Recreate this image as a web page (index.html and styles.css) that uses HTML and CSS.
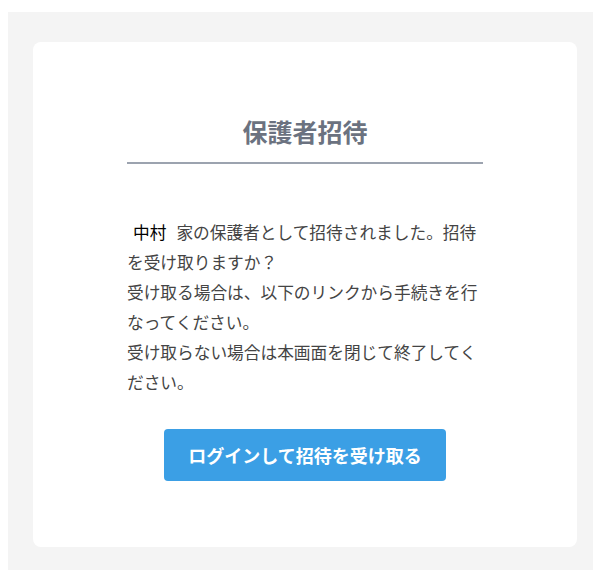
FILE: index.html
```html
<!DOCTYPE html>
<html lang="ja">
<head>
<meta charset="utf-8">
<title>保護者招待</title>
<link rel="stylesheet" href="styles.css">
</head>
<body>
<div class="page">
  <div class="card">
    <div class="content">
      <h1 class="title">保護者招待</h1>
      <div class="rule"></div>
      <p class="message"><span class="name">中村</span>家の保護者として招待されました。招待を受け取りますか？<br>受け取る場合は、以下のリンクから手続きを行なってください。<br>受け取らない場合は本画面を閉じて終了してください。</p>
      <a class="button" href="#">ログインして招待を受け取る</a>
    </div>
  </div>
</div>
</body>
</html>
```
FILE: styles.css
```css
html, body {
  margin: 0;
  padding: 0;
  background: #ffffff;
}
body {
  font-family: "Noto Sans CJK JP", "Noto Sans", sans-serif;
}
.page {
  margin: 12px 11px 0 8px;
  padding: 30px 16px 23px 25px;
  background: #f4f4f4;
}
.card {
  background: #ffffff;
  border-radius: 8px;
  height: 505px;
  box-sizing: border-box;
  padding-top: 73px;
  display: flex;
  justify-content: center;
}
.content {
  width: 356px;
  display: flex;
  flex-direction: column;
  align-items: center;
}
.title {
  margin: 0;
  font-size: 25px;
  line-height: 32px;
  font-weight: 700;
  color: #6b7280;
}
.rule {
  align-self: stretch;
  height: 2px;
  background: #9ca3af;
  margin-top: 15px;
}
.message {
  align-self: stretch;
  margin: 53px 0 0 0;
  font-size: 16.7px;
  line-height: 30px;
  color: #444444;
  width: 358px;
}
.name {
  color: #000000;
  margin: 0 10px 0 6px;
}
.button {
  margin-top: 32px;
  width: 282px;
  height: 52px;
  box-sizing: border-box;
  display: flex;
  align-items: center;
  justify-content: center;
  background: #3b9fe5;
  color: #ffffff;
  border-radius: 4px;
  font-size: 18px;
  font-weight: 700;
  text-decoration: none;
}
```
